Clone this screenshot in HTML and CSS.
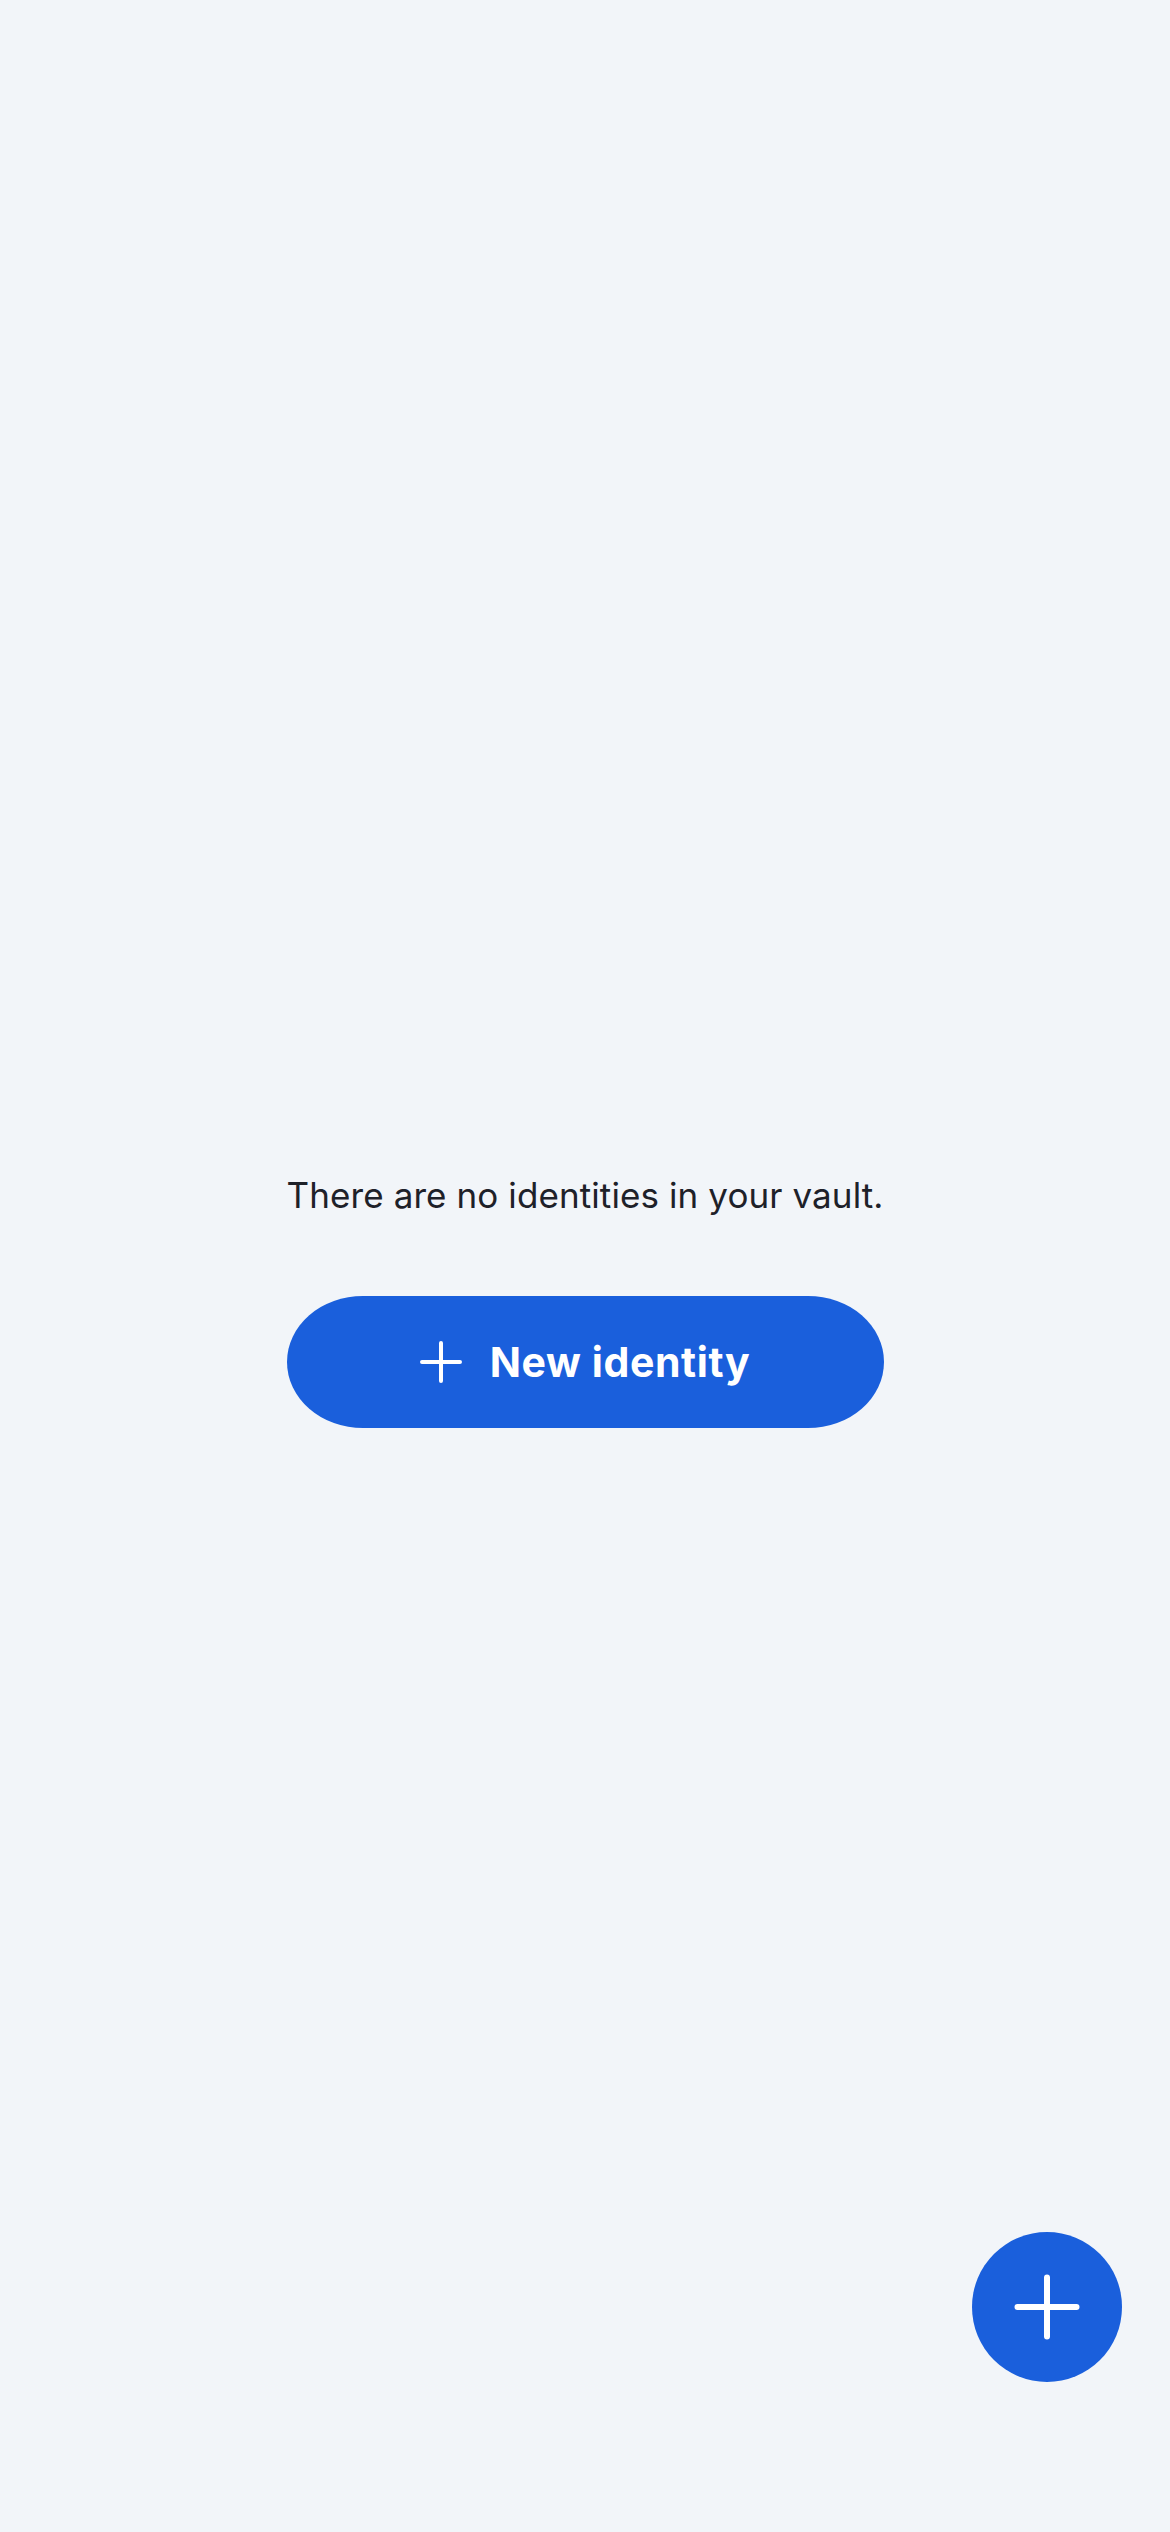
FILE: index.html
```html
<!DOCTYPE html>
<html lang="en">
<head>
<meta charset="utf-8">
<title>Identities</title>
<link rel="stylesheet" href="styles.css">
</head>
<body>
<main class="empty">
  <p class="empty-text">There are no identities in your vault.</p>
  <button class="new-btn" type="button">
    <svg class="new-icon" viewBox="0 0 42 42" width="42" height="42" aria-hidden="true">
      <path d="M21 2v38M2 21h38" stroke="#fff" stroke-width="4" stroke-linecap="round" fill="none"/>
    </svg>
    <span>New identity</span>
  </button>
</main>
<button class="fab" type="button" aria-label="Add">
  <svg viewBox="0 0 70 70" width="70" height="70" aria-hidden="true">
    <path d="M35 5.5v59M5.5 35h59" stroke="#fff" stroke-width="6" stroke-linecap="round" fill="none"/>
  </svg>
</button>
</body>
</html>
```
FILE: styles.css
```css
html, body {
  margin: 0;
  padding: 0;
}
body {
  width: 1170px;
  height: 2532px;
  background: #f2f5f9;
  font-family: Inter, "Noto Sans", sans-serif;
  position: relative;
  overflow: hidden;
}
.empty {
  display: flex;
  flex-direction: column;
  align-items: center;
  padding-top: 1171px;
}
.empty-text {
  margin: 0;
  font-size: 35px;
  line-height: 48px;
  color: #1e2129;
  letter-spacing: 0.1px;
}
.new-btn {
  margin-top: 77px;
  width: 597px;
  height: 132px;
  border: none;
  border-radius: 76px / 66px;
  background: #1a5fdc;
  color: #fff;
  display: flex;
  align-items: center;
  justify-content: center;
  gap: 28px;
  font-family: Inter, "Noto Sans", sans-serif;
  font-weight: 700;
  font-size: 41px;
  letter-spacing: 0.6px;
  padding: 0;
}
.new-icon {
  display: block;
}
.fab {
  position: absolute;
  right: 48px;
  bottom: 150px;
  width: 150px;
  height: 150px;
  border-radius: 50%;
  border: none;
  background: #1a5fdc;
  display: flex;
  align-items: center;
  justify-content: center;
  padding: 0;
}
.fab svg {
  display: block;
}
```
